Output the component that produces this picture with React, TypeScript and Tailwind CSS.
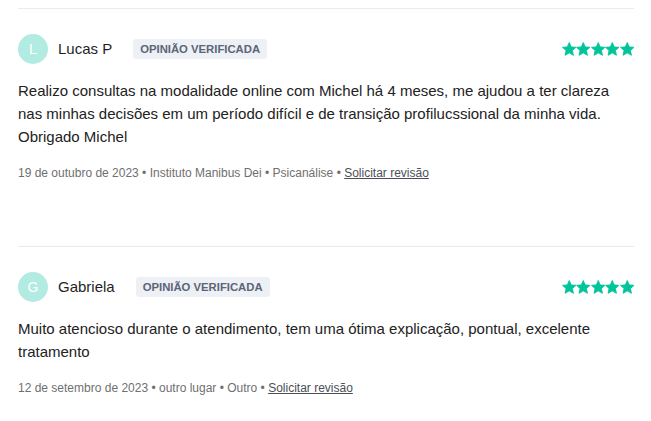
const reviews = [
  {
    id: 1,
    initial: "L",
    name: "Lucas P",
    text: "Realizo consultas na modalidade online com Michel há 4 meses, me ajudou a ter clareza nas minhas decisões em um período difícil e de transição profilucssional da minha vida. Obrigado Michel",
    date: "19 de outubro de 2023",
    place: "Instituto Manibus Dei",
    service: "Psicanálise",
  },
  {
    id: 2,
    initial: "G",
    name: "Gabriela",
    text: "Muito atencioso durante o atendimento, tem uma ótima explicação, pontual, excelente tratamento",
    date: "12 de setembro de 2023",
    place: "outro lugar",
    service: "Outro",
  },
];

function Star() {
  return (
    <svg width="14.5" height="14" viewBox="0 0 24 23" className="shrink-0">
      <path
        d="M12 0.8l3.2 7.2 7.9 0.8-5.9 5.3 1.7 7.8L12 17.9l-6.9 4 1.7-7.8-5.9-5.3 7.9-0.8z"
        fill="#00c49a"
        stroke="#00c49a"
        strokeWidth="1.5"
        strokeLinejoin="round"
      />
    </svg>
  );
}

export default function App() {
  return (
    <div className="bg-white min-h-screen pt-2 px-[18px] font-['Liberation_Sans',Arial,sans-serif]">
      <div className="w-[616px]">
        {reviews.map((r) => (
          <div key={r.id} className="border-t border-[#e9ebef] pt-[25px] pb-[65px]">
            <div className="flex items-center justify-between h-[30px]">
              <div className="flex items-center">
                <div className="w-[30px] h-[30px] rounded-full bg-[#b2ebe1] flex items-center justify-center text-white text-[14px]">
                  {r.initial}
                </div>
                <span className="ml-[10px] text-[15px] text-[#1f1f1f]">{r.name}</span>
                <span className="ml-[21px] bg-[#edf0f4] text-[#5b6578] text-[11.3px] font-bold rounded-[3px] px-[7px] h-[20px] flex items-center">
                  OPINIÃO VERIFICADA
                </span>
              </div>
              <div className="flex items-center">
                {[0, 1, 2, 3, 4].map((i) => (
                  <Star key={i} />
                ))}
              </div>
            </div>
            <p className="mt-[15px] text-[15px] leading-[23px] text-[#222]">{r.text}</p>
            <p className="mt-[17px] text-[12px] leading-[16px] text-[#6f6f6f]">
              {r.date} • {r.place} • {r.service} •{" "}
              <span className="underline text-[#4a4f57]">Solicitar revisão</span>
            </p>
          </div>
        ))}
      </div>
    </div>
  );
}
